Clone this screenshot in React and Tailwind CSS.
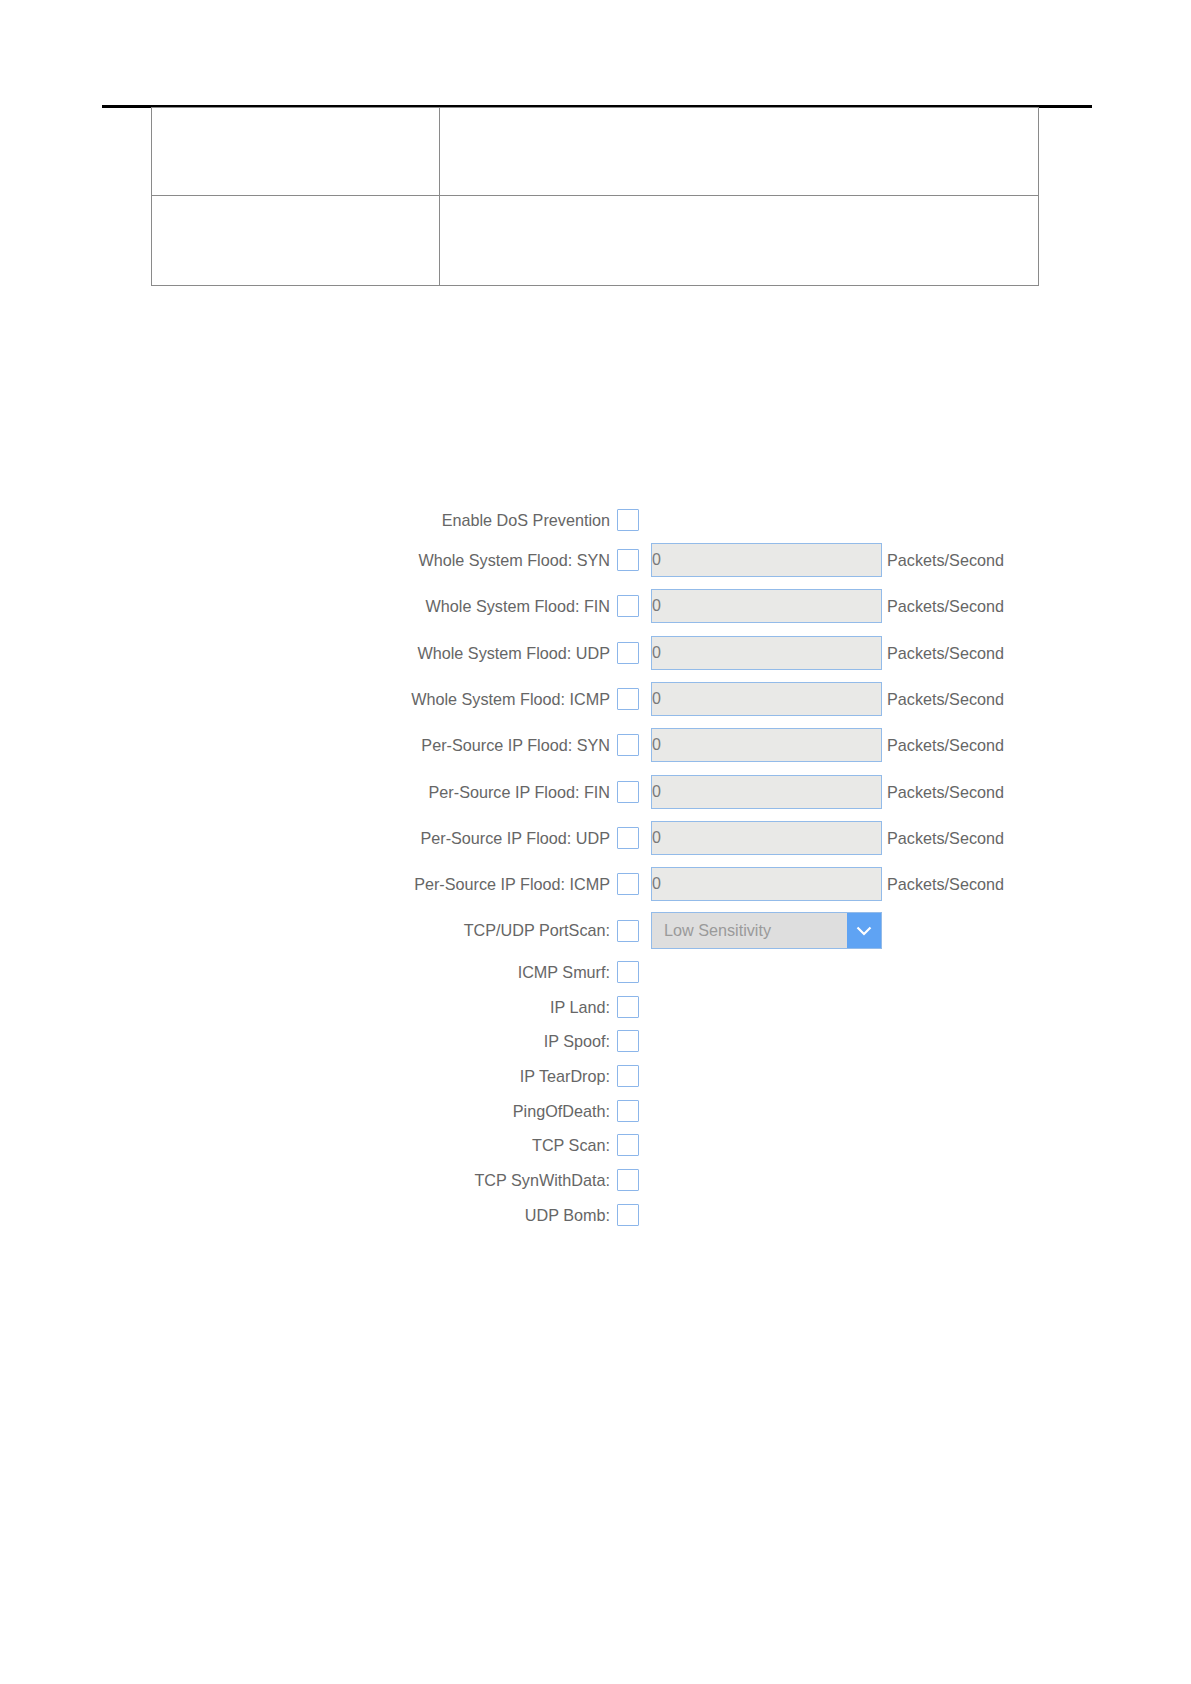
import React from 'react';

const floodRows = [
  'Whole System Flood: SYN',
  'Whole System Flood: FIN',
  'Whole System Flood: UDP',
  'Whole System Flood: ICMP',
  'Per-Source IP Flood: SYN',
  'Per-Source IP Flood: FIN',
  'Per-Source IP Flood: UDP',
  'Per-Source IP Flood: ICMP',
];

const simpleRows = [
  'ICMP Smurf:',
  'IP Land:',
  'IP Spoof:',
  'IP TearDrop:',
  'PingOfDeath:',
  'TCP Scan:',
  'TCP SynWithData:',
  'UDP Bomb:',
];

function Check() {
  return (
    <input
      type="checkbox"
      className="appearance-none m-0 ml-[7px] w-[22px] h-[22px] shrink-0 border-[1.5px] border-[#8cb6ea] bg-white rounded-[1px]"
    />
  );
}

function Label({ children }) {
  return <span className="w-[610px] shrink-0 text-right leading-none">{children}</span>;
}

export default function App() {
  return (
    <div className="w-[1191px] h-[1684px] bg-white pt-[105px] text-[16.2px] text-[#666666]" style={{ fontFamily: '"Liberation Sans", Arial, sans-serif' }}>
      {/* header rule + empty table */}
      <div className="ml-[102px] w-[990px] h-[3px] bg-black" />
      <div className="ml-[151px] -mt-[1px] w-[888px] border border-[#8a8a8a] grid grid-cols-[288px_1fr]">
        <div className="h-[88px] border-r border-b border-[#8a8a8a]" />
        <div className="h-[88px] border-b border-[#8a8a8a]" />
        <div className="h-[89px] border-r border-[#8a8a8a]" />
        <div className="h-[89px]" />
      </div>

      {/* DoS form */}
      <div className="mt-[217px] flex flex-col">
        <div className="h-[34px] flex items-center">
          <Label>Enable DoS Prevention</Label>
          <Check />
        </div>

        {floodRows.map((r) => (
          <div key={r} className="h-[46.3px] flex items-center">
            <Label>{r}</Label>
            <Check />
            <input
              readOnly
              value="0"
              className="ml-[12px] w-[231px] h-[34px] border border-[#93bbe9] bg-[#e9e9e7] pl-0 text-[16px] text-[#7a7a7a] outline-none"
            />
            <span className="ml-[5px] leading-none">Packets/Second</span>
          </div>
        ))}

        <div className="h-[46.3px] flex items-center">
          <Label>TCP/UDP PortScan:</Label>
          <Check />
          <div className="ml-[12px] w-[231px] h-[37px] flex border border-[#93bbe9] bg-[#dedede]">
            <span className="flex-1 flex items-center pl-[12px] text-[#9a9a9a]">Low Sensitivity</span>
            <span className="w-[34px] flex items-center justify-center bg-[#5fa3f3]">
              <svg width="16" height="10" viewBox="0 0 16 10">
                <polyline points="1.5,1.5 8,8 14.5,1.5" fill="none" stroke="white" strokeWidth="2.2" />
              </svg>
            </span>
          </div>
        </div>

        <div className="mt-[1px] flex flex-col">
          {simpleRows.map((r) => (
            <div key={r} className="h-[34.7px] flex items-center">
              <Label>{r}</Label>
              <Check />
            </div>
          ))}
        </div>
      </div>
    </div>
  );
}
